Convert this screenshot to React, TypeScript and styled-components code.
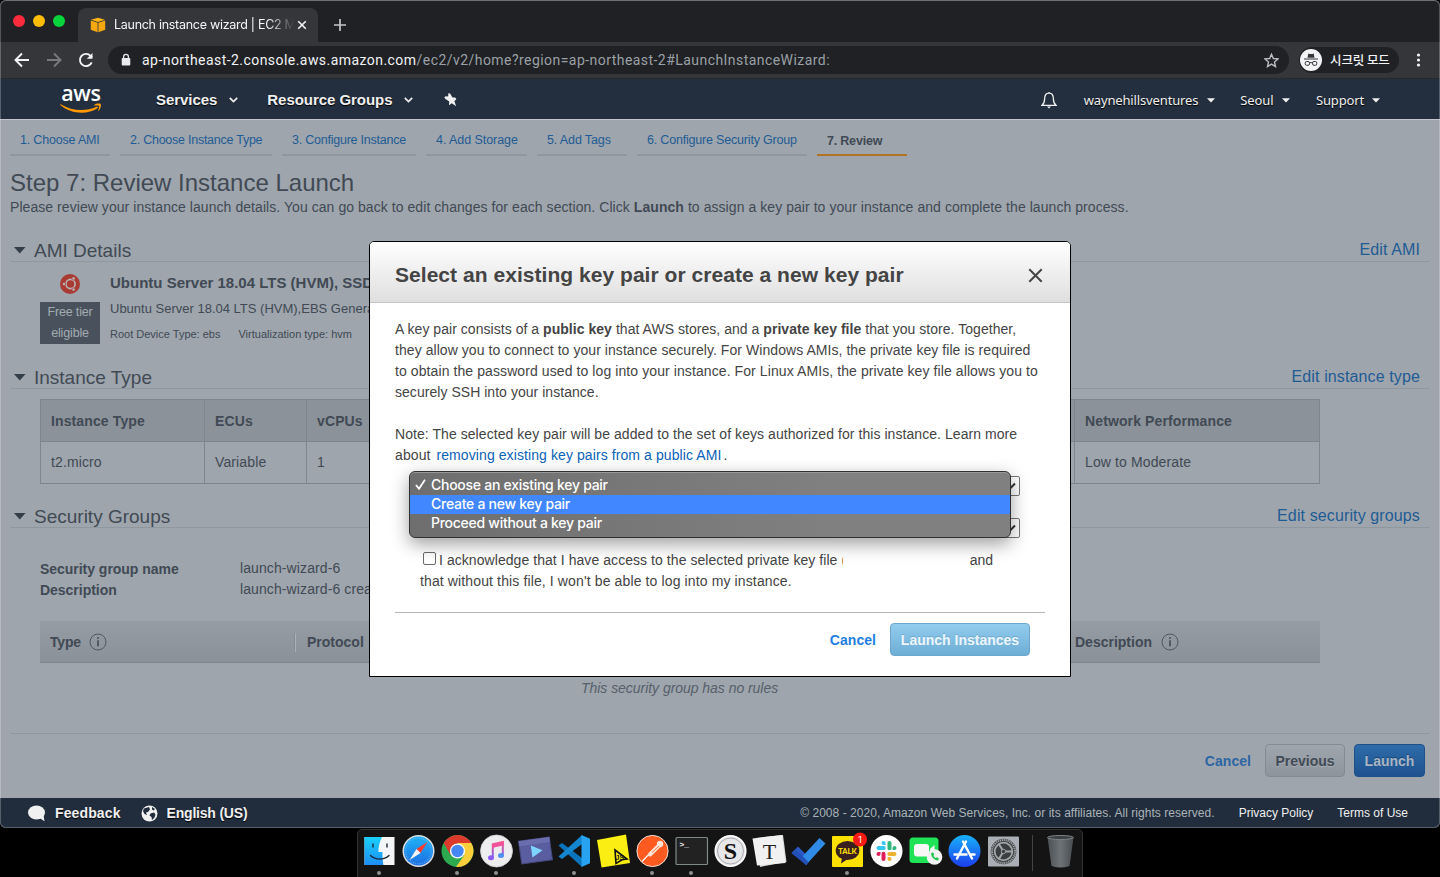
import React from "react";
import styled, { createGlobalStyle, css } from "styled-components";

const GlobalStyle = createGlobalStyle`
  html, body { margin: 0; padding: 0; background: #000; }
  body { font-family: "Liberation Sans", Arial, sans-serif; overflow: hidden; }
  *, *::before, *::after { box-sizing: border-box; }
  svg { display: block; flex: none; }
`;

const Desktop = styled.div`
  position: relative;
  display: flex;
  flex-direction: column;
  align-items: center;
  width: 1440px;
  height: 877px;
  background: #000;
  overflow: hidden;
`;

const BrowserWindow = styled.div`
  position: relative;
  display: flex;
  flex: none;
  flex-direction: column;
  width: 1440px;
  height: 828px;
  border-radius: 6px;
  overflow: hidden;
  background: #9ea5ad;
  &::after {
    content: "";
    position: absolute;
    inset: 0;
    border-radius: 6px;
    box-shadow: inset 0 0 0 1px rgba(255, 255, 255, 0.24), inset 0 1px 0 rgba(255, 255, 255, 0.15);
    pointer-events: none;
  }
`;

/* ---------- browser chrome ---------- */

const TabStrip = styled.div`
  display: flex;
  align-items: flex-end;
  height: 42px;
  background: #202124;
`;

const TrafficLights = styled.div`
  display: flex;
  gap: 8px;
  width: 78px;
  padding: 0 0 15px 13px;
`;

const Light = styled.span<{ $color: string }>`
  width: 12px;
  height: 12px;
  border-radius: 50%;
  background: ${(p) => p.$color};
`;

const Tab = styled.div`
  display: flex;
  align-items: center;
  width: 240px;
  height: 34px;
  padding: 0 11px 0 12px;
  border-radius: 8px 8px 0 0;
  background: #35363a;
`;

const TabTitle = styled.span`
  flex: 1;
  margin-left: 8px;
  white-space: nowrap;
  font: 400 12.5px/18px Inter, Roboto, sans-serif;
  letter-spacing: -0.28px;
  color: #f4f5f6;
  mask-image: linear-gradient(90deg, #000 154px, transparent 180px);
`;

const NewTab = styled.div`
  padding: 0 0 10px 15px;
`;

const Toolbar = styled.div`
  display: flex;
  align-items: center;
  height: 37px;
  padding: 0 14px;
  border-bottom: 1px solid #28292c;
  background: #35363a;
`;

const NavButtons = styled.div`
  display: flex;
  gap: 16px;
  width: 94px;
`;

const AddressBar = styled.div`
  display: flex;
  align-items: center;
  width: 1181px;
  height: 28px;
  padding: 0 10px 0 12px;
  border-radius: 14px;
  background: #202124;
`;

const Url = styled.span`
  flex: 1;
  margin-left: 10px;
  white-space: nowrap;
  font: 400 14px/20px Roboto, sans-serif;
  letter-spacing: 0.45px;
  color: #9aa0a6;
  b {
    font-weight: 400;
    color: #f1f3f4;
  }
`;

const IncognitoPill = styled.div`
  display: flex;
  align-items: center;
  gap: 8px;
  width: 100px;
  height: 26px;
  margin-left: 10px;
  padding-left: 1px;
  border-radius: 13px;
  background: #202124;
  font: 500 12.5px/18px "Noto Sans CJK KR", sans-serif;
  color: #f1f3f4;
  white-space: nowrap;
  letter-spacing: -0.1px;
`;

const ToolbarMenu = styled.div`
  margin-left: 16px;
`;

/* ---------- console header ---------- */

const ConsoleHeader = styled.header`
  display: flex;
  align-items: center;
  height: 40px;
  padding: 2px 60px 0;
  background: #232f3e;
`;

const Logo = styled.div`
  display: flex;
  flex-direction: column;
  align-items: center;
  width: 42px;
  height: 30px;
  margin-top: -5px;
  font: 600 21.5px/19px "Open Sans", sans-serif;
  letter-spacing: -0.3px;
  color: #fff;
  svg { margin-top: 1px; }
`;

const NavItem = styled.div<{ $ml: number; $small?: boolean; $gap: number }>`
  display: flex;
  align-items: center;
  gap: ${(p) => p.$gap}px;
  margin-left: ${(p) => p.$ml}px;
  color: #f0f0f0;
  white-space: nowrap;
  text-shadow: 0 1px 1px #000;
  ${(p) =>
    p.$small
      ? css`font: 400 13px/20px "Noto Sans", sans-serif; letter-spacing: -0.14px;`
      : css`font: 700 15px/20px "Liberation Sans", Arial, sans-serif; letter-spacing: -0.05px;`}
`;

const Spacer = styled.div`
  flex: 1;
`;

/* ---------- page ---------- */

const Page = styled.main`
  display: flex;
  flex-direction: column;
  height: 679px;
  padding: 0 10px;
  border-top: 1px solid #c0c6cc;
  background: #9ea5ad;
  color: #414a54;
`;

const WizardSteps = styled.nav`
  display: flex;
  gap: 10px;
  height: 36px;
`;

const WizardStep = styled.div<{ $w: number; $active?: boolean; $ls: number }>`
  width: ${(p) => p.$w}px;
  padding: ${(p) => (p.$active ? 11 : 10)}px 0 0 10px;
  border-bottom: 2px solid ${(p) => (p.$active ? "#b17423" : "#8f979f")};
  font-size: 12.5px;
  line-height: 20px;
  white-space: nowrap;
  letter-spacing: ${(p) => p.$ls}px;
  font-weight: ${(p) => (p.$active ? 700 : 400)};
  color: ${(p) => (p.$active ? "#414a54" : "#1f5c94")};
`;

const PageTitle = styled.h1`
  margin: 12px 0 0;
  font-size: 24px;
  line-height: 30px;
  font-weight: 400;
`;

const Intro = styled.p`
  margin: -1px 0 0;
  font-size: 14px;
  line-height: 21px;
  letter-spacing: 0.059px;
  white-space: nowrap;
`;

const SectionHead = styled.div<{ $mt: number }>`
  display: flex;
  align-items: center;
  height: 25px;
  margin-top: ${(p) => p.$mt}px;
  padding: 4px 10px 0 4px;
  border-bottom: 1px solid #8f979f;
  svg { margin-top: -2px; }
  h2 {
    flex: 1;
    margin: 0 0 0 8px;
    font-size: 19px;
    line-height: 20px;
    font-weight: 400;
  }
  a {
    margin-top: -2px;
    font-size: 16px;
    line-height: 20px;
    letter-spacing: 0.12px;
    color: #1f5c94;
  }
`;

const AmiRow = styled.div`
  display: flex;
  gap: 10px;
  height: 101px;
  padding: 10px 0 0 30px;
  white-space: nowrap;
`;

const AmiBadge = styled.div`
  display: flex;
  flex-direction: column;
  align-items: center;
  width: 60px;
  padding-top: 2px;
`;

const FreeTier = styled.div`
  width: 60px;
  height: 42px;
  margin-top: 8px;
  background: #49525c;
  color: #a3abb2;
  font-size: 12.5px;
  line-height: 21px;
  letter-spacing: -0.15px;
  text-align: center;
`;

const AmiText = styled.div`
  h3 { margin: 0; font-size: 15px; line-height: 22px; }
  p { margin: 4px 0 0; font-size: 13px; line-height: 21px; }
  div { display: flex; gap: 18px; margin-top: 5px; font-size: 11px; line-height: 21px; }
`;

const InstanceTable = styled.div`
  display: grid;
  grid-template-columns: 164px 102px 768px 244px;
  grid-template-rows: 42px 41px;
  width: 1280px;
  height: 85px;
  margin: 10px 0 0 30px;
  border: 1px solid #7d858e;
`;

const Cell = styled.div<{ $head?: boolean; $last?: boolean }>`
  padding: 0 10px;
  font-size: 14px;
  line-height: ${(p) => (p.$head ? 43 : 41)}px;
  letter-spacing: 0.12px;
  font-weight: ${(p) => (p.$head ? 700 : 400)};
  background: ${(p) => (p.$head ? "#8b929a" : "transparent")};
  border-right: ${(p) => (p.$last ? 0 : 1)}px solid #7d858e;
  border-bottom: ${(p) => (p.$head ? 1 : 0)}px solid #7d858e;
`;

const Definitions = styled.dl`
  display: grid;
  grid-template-columns: 200px 600px;
  grid-auto-rows: 21px;
  margin: 30px 0 0 30px;
  font-size: 14px;
  line-height: 21px;
  dt { font-weight: 700; padding-top: 1px; letter-spacing: -0.03px; }
  dd { margin: 0; letter-spacing: 0.1px; }
`;

const RulesHead = styled.div`
  display: flex;
  align-items: center;
  width: 1280px;
  height: 42px;
  margin: 21px 0 0 30px;
  padding: 1px 10px 0;
  background: linear-gradient(#959ca4, #8a9199);
  border-bottom: 1px solid #7d858d;
  font-size: 14px;
  font-weight: 700;
  color: #414a54;
`;

const RuleCol = styled.div<{ $w: number; $div?: boolean; $indent?: number; $ls?: number }>`
  display: flex;
  align-items: center;
  gap: 8.5px;
  width: ${(p) => p.$w}px;
  height: 19px;
  padding-left: ${(p) => p.$indent ?? 0}px;
  line-height: 19px;
  letter-spacing: ${(p) => p.$ls ?? 0}px;
  border-right: ${(p) => (p.$div ? "1px solid #a9b0b7" : "0")};
  box-shadow: ${(p) => (p.$div ? "inset -1px 0 0 #858c94" : "none")};
`;

const NoRules = styled.div`
  margin: 15px 0 0 571px;
  font-size: 14px;
  line-height: 21px;
  font-style: italic;
  letter-spacing: -0.04px;
  color: #57606a;
`;

const ActionBar = styled.div`
  display: flex;
  justify-content: flex-end;
  align-items: center;
  height: 54px;
  margin-top: 34px;
  padding-right: 5px;
  border-top: 1px solid #8f979f;
`;

const CancelLink = styled.a<{ $dim?: boolean }>`
  margin-right: 14px;
  padding-top: ${(p) => (p.$dim ? 1 : 2)}px;
  font-size: 14px;
  font-weight: 700;
  letter-spacing: 0.05px;
  color: ${(p) => (p.$dim ? "#2c66a3" : "#1f7fe0")};
`;

type Tone = "plain" | "primary" | "light";
const tones = {
  plain: css`background: linear-gradient(#a0a6ad, #8d949c); border-color: #838b93; color: #414a54; text-shadow: 0 1px 0 #a6adb5;`,
  primary: css`background: linear-gradient(#2e6ca9, #1d528f); border-color: #1e5089; color: #a9b6c4; text-shadow: 0 -1px 0 #1a4475;`,
  light: css`background: linear-gradient(#92ccef, #6dadd4); border-color: #6ba8cb; color: #edf7fd; text-shadow: 0 -1px 0 #6fa9cc;`,
};

const Button = styled.button<{ $tone: Tone; $w: number; $ml?: number }>`
  width: ${(p) => p.$w}px;
  height: 33px;
  margin: 0 0 0 ${(p) => p.$ml ?? 0}px;
  padding: 0;
  border: 1px solid;
  border-radius: 4px;
  font: 700 14px/20px "Liberation Sans", Arial, sans-serif;
  white-space: nowrap;
  ${(p) => tones[p.$tone]}
`;

const ConsoleFooter = styled.footer`
  display: flex;
  align-items: center;
  height: 30px;
  padding: 0 32px 0 28px;
  background: #212d3c;
  color: #f0f0f0;
  font-size: 12px;
  white-space: nowrap;
`;

const FooterItem = styled.div<{ $mr: number; $ls: number }>`
  display: flex;
  align-items: center;
  gap: 9px;
  margin-right: ${(p) => p.$mr}px;
  font-size: 14px;
  font-weight: 700;
  letter-spacing: ${(p) => p.$ls}px;
  text-shadow: 0 1px 1px #000;
`;

const Copyright = styled.span`
  letter-spacing: 0.04px;
  color: #a9b3b8;
`;

const FooterLink = styled.span`
  margin-left: 24px;
`;

/* ---------- dialog ---------- */

const Dialog = styled.section`
  position: absolute;
  left: 369px;
  top: 241px;
  width: 702px;
  height: 436px;
  border: 1px solid #000;
  border-radius: 5px 5px 0 0;
  background: #fff;
  color: #444;
  overflow: hidden;
`;

const DialogHead = styled.div`
  display: flex;
  align-items: center;
  justify-content: space-between;
  height: 61px;
  padding: 6px 27px 0 25px;
  border-bottom: 1px solid #c4c4c4;
  background: linear-gradient(#fff, #dfdfdf);
  h2 {
    margin: 0;
    font-size: 21px;
    line-height: 26px;
    letter-spacing: 0.04px;
    white-space: nowrap;
  }
`;

const DialogBody = styled.div`
  padding: 16px 25px 0;
  font-size: 14px;
  line-height: 21px;
  white-space: nowrap;
`;

const Paragraph = styled.p`
  margin: 0 0 21px;
`;

const Line = styled.span<{ $ls?: number }>`
  display: block;
  letter-spacing: ${(p) => p.$ls ?? 0.06}px;
  a { color: #0b62b8; margin-left: 2px; margin-right: 2px; }
`;

const SelectBox = styled.div<{ $mt: number }>`
  display: flex;
  align-items: center;
  justify-content: flex-end;
  height: 20px;
  margin: ${(p) => p.$mt}px 25px 0;
  padding-right: 3px;
  border: 1px solid #767676;
  border-radius: 2px;
  background: #fff;
`;

const Acknowledge = styled.div`
  height: 42px;
  margin: 12px 25px 0;
`;

const Checkbox = styled.span`
  display: inline-block;
  width: 13px;
  height: 13px;
  margin: 0 3px 0 3px;
  border: 1px solid #6a6a6a;
  border-radius: 2px;
  background: #fff;
  vertical-align: 0;
`;

const HiddenName = styled.span`
  display: inline-block;
  position: relative;
  width: 126.5px;
  height: 20px;
  margin-left: -3px;
  background: #fff;
  vertical-align: -6px;
`;

const DialogActions = styled.div`
  display: flex;
  justify-content: flex-end;
  align-items: center;
  height: 54px;
  margin-top: 20px;
  padding-right: 15px;
  border-top: 1px solid #b5b5b5;
`;

const Menu = styled.ul`
  position: absolute;
  left: 409px;
  top: 471px;
  width: 602px;
  height: 67px;
  margin: 0;
  padding: 4px 0;
  list-style: none;
  border: 1px solid #303030;
  border-radius: 6px;
  background: linear-gradient(90deg, #6e6e6e, #808080 70%);
  box-shadow: inset 0 1px 0 #999, 0 6px 18px rgba(0, 0, 0, 0.38);
`;

const MenuItem = styled.li<{ $active?: boolean }>`
  display: flex;
  align-items: center;
  height: 19px;
  padding: 0 0 2px 5px;
  background: ${(p) => (p.$active ? "#4187ff" : "transparent")};
  color: #fff;
  font: 500 14px/17px Inter, Roboto, sans-serif;
  letter-spacing: -0.27px;
  white-space: nowrap;
`;

const MenuMark = styled.span`
  width: 16px;
`;

/* ---------- dock ---------- */

const Dock = styled.div`
  display: flex;
  flex: none;
  width: 726px;
  height: 50px;
  margin-top: 1px;
  padding-left: 2px;
  border: 1px solid #333;
  border-radius: 5px 5px 0 0;
  background: #141414;
`;

const DockSlot = styled.div<{ $running?: boolean }>`
  display: flex;
  flex-direction: column;
  align-items: center;
  width: 39px;
  padding-top: 2px;
  &::after {
    content: "";
    width: 4px;
    height: 4px;
    margin: 2px 1px 0 0;
    border-radius: 50%;
    background: ${(p) => (p.$running ? "#8f8f8f" : "transparent")};
  }
`;

const DockDivider = styled.div`
  width: 1px;
  height: 36px;
  margin: 5px 8px 0 9px;
  background: #444;
`;

/* ---------- small drawings ---------- */

const Chevron = () => (
  <svg width="9" height="6" viewBox="0 0 9 6" fill="none" stroke="#f0f0f0" strokeWidth="1.7"><path d="M.8.9 4.5 4.5 8.2.9" /></svg>
);
const Caret = () => (
  <svg width="8" height="5" viewBox="0 0 8 5" fill="#f0f0f0"><path d="M0 .3h8L4 4.5z" /></svg>
);
const Disclosure = () => (
  <svg width="12" height="7" viewBox="0 0 12 7" fill="#343e49"><path d="M0 0h11.500L5.750 6.500z" /></svg>
);
const Info = () => (
  <svg width="18" height="18" viewBox="0 0 18 18" fill="none" stroke="#505963">
    <circle cx="9" cy="9" r="8" />
    <path d="M9 7.300v6" strokeWidth="2" />
    <circle cx="9" cy="5" r="1.1" fill="#505963" stroke="none" />
  </svg>
);
const SelectArrow = () => (
  <svg width="11" height="8" viewBox="0 0 11 8" fill="none" stroke="#333" strokeWidth="2"><path d="M1 1.500 5.500 6 10 1.500" /></svg>
);

const dockIcons: { running?: boolean; art: React.ReactNode }[] = [
  { running: true, art: (
    <>
      <rect x="3.500" y="5" width="30" height="28" fill="#f3f5f7" />
      <path d="M3.500 5H21c-2.500 5-3.600 10-3.600 15h4c-.1 4 .2 8 1 13H3.500z" fill="url(#finder)" />
      <path d="M12 12v3M26 12v3M9.500 23.500c5 4.800 13.500 4.800 18.500 0" fill="none" stroke="#1b2a3a" strokeWidth="1.400" strokeLinecap="round" />
    </>
  ) },
  { art: (
    <>
      <circle cx="18.500" cy="19" r="16" fill="#d9dde1" />
      <circle cx="18.500" cy="19" r="14.500" fill="url(#safari)" />
      <circle cx="18.500" cy="19" r="12.800" fill="none" stroke="#6fbdf2" strokeWidth="1.400" strokeDasharray=".6 1.300" />
      <path d="M27.500 10 20.500 21l-4-4z" fill="#ff3b30" />
      <path d="M9.500 28l7-11 4 4z" fill="#f4f4f4" />
    </>
  ) },
  { running: true, art: (
    <g transform="translate(2.500 3)">
      <circle cx="16" cy="16" r="16" fill="#2da94f" />
      <path d="M14.500 31.900A16 16 0 0 0 29.800 8H16l6.900 12z" fill="#fdd03b" />
      <path d="M2.200 8a16 16 0 0 1 27.600 0H16L9.100 20z" fill="#db3a2d" />
      <circle cx="16" cy="16" r="7.600" fill="#fff" />
      <circle cx="16" cy="16" r="6.200" fill="#4587f3" />
    </g>
  ) },
  { running: true, art: (
    <>
      <circle cx="18.500" cy="19" r="16" fill="#ededf0" stroke="#cfcfd4" strokeWidth=".8" />
      <path d="M14.800 25.500V12.300l10-2.300v13" fill="none" stroke="url(#note)" strokeWidth="2" />
      <path d="M14 12.500 25.800 9.800v3.500L14 16z" fill="#f2519b" />
      <ellipse cx="13" cy="25.800" rx="3" ry="2.500" fill="#8c5cf5" />
      <ellipse cx="23" cy="23.500" rx="3" ry="2.500" fill="#4f8df8" />
    </>
  ) },
  { art: (
    <g transform="rotate(-8 18.500 18.500)">
      <rect x="3" y="7" width="31" height="23" fill="#5a5ea0" stroke="#44487c" />
      <path d="M3 7h31v5H3z" fill="#6a6eae" />
      <path d="m14.500 13 11 6.200-11 5.800z" fill="#7fd4ff" />
    </g>
  ) },
  { running: true, art: (
    <>
      <path d="M2.500 13.500 6 11l20 15v9z" fill="#0a74bd" />
      <path d="M2.500 24.500 6 27l20-15V3z" fill="#1485cf" />
      <path d="M25.500 3 34 6.800v24.400L25.500 35z" fill="#27a3f1" />
    </>
  ) },
  { art: (
    <>
      <path d="M2 8 31 2.500 35 31 6.500 35.500z" fill="#fbee12" />
      <path d="m20 18 12 9-5 .8-6 3.700z" fill="none" stroke="#111" strokeWidth="1.600" />
      <text x="20.500" y="27.500" fontSize="7" fontWeight="700" fill="#111" fontFamily="Liberation Sans">JS</text>
    </>
  ) },
  { running: true, art: (
    <>
      <circle cx="18.500" cy="19" r="15.600" fill="#ff5a1f" stroke="#f2e3dc" strokeWidth="1" />
      <path d="M8 29.500 20 17" stroke="#fff" strokeWidth="1.200" />
      <path d="M16 22.500 24.500 14" stroke="#ffe4d6" strokeWidth="4" strokeLinecap="round" />
      <circle cx="26" cy="12" r="3.200" fill="#ffe4d6" />
      <path d="m18 20.500 7-6.500" stroke="#ff5a1f" strokeWidth=".8" />
    </>
  ) },
  { running: true, art: (
    <>
      <rect x="3" y="5.500" width="31.500" height="27" rx="1" fill="#222" stroke="#7d8b8b" strokeWidth="1.200" />
      <text x="6.500" y="15" fontSize="8" fontWeight="700" fill="#eee" fontFamily="Liberation Mono">&gt;_</text>
    </>
  ) },
  { art: (
    <>
      <circle cx="18.500" cy="19" r="15.300" fill="#e7e7ea" stroke="#fff" strokeWidth="1.500" />
      <circle cx="18.500" cy="19" r="13" fill="none" stroke="#9b9ba2" strokeWidth=".8" />
      <text x="18.500" y="27" fontSize="24" fontWeight="700" fill="#111" textAnchor="middle" fontFamily="Liberation Serif">S</text>
    </>
  ) },
  { art: (
    <>
      <path d="M5 6 32 3 35.500 30 9 35z" fill="#d9d9d9" />
      <path d="M1.500 6.500 31 3l3.500 28L6 33.500z" fill="#f1f1f1" />
      <text x="18.500" y="27" fontSize="22" fill="#222" textAnchor="middle" fontFamily="Liberation Serif">T</text>
    </>
  ) },
  { art: (
    <>
      <path d="M1.500 21 8 14.500l9.500 9.500-.5 9z" fill="#2b59c3" />
      <path d="m10.500 26.500 19-20.500 6 5.500L16 33z" fill="#2f8be6" />
      <path d="m1.500 21 4-4 13 13-2.500 3z" fill="#2250b8" />
    </>
  ) },
  { running: true, art: (
    <>
      <rect x="3" y="4" width="31" height="31" rx="1" fill="#fae100" />
      <ellipse cx="18.500" cy="18.500" rx="11.800" ry="9.500" fill="#3b1e1e" />
      <path d="m13 26-1 5.500 6-4z" fill="#3b1e1e" />
      <text x="18.500" y="21.500" fontSize="7.500" fontWeight="900" fill="#fae100" textAnchor="middle" fontFamily="Lato, Inter">TALK</text>
      <circle cx="31" cy="7.500" r="7" fill="#fa1a14" />
      <text x="31" y="11" fontSize="9.500" fill="#fff" textAnchor="middle" fontFamily="Inter">1</text>
    </>
  ) },
  { art: (
    <>
      <circle cx="18.500" cy="19" r="16" fill="#fff" />
      {["#36c5f0", "#2eb67d", "#ecb22e", "#e01e5a"].map((color, i) => (
        <g key={color} transform={`translate(18.500 19) rotate(${i * 90})`} fill={color}>
          <rect x="-10" y="-5" width="9.200" height="4" rx="2" />
          <path d="M-5 -8a2 2 0 1 1 4 0v2h-2a2 2 0 0 1-2-2z" />
        </g>
      ))}
    </>
  ) },
  { art: (
    <>
      <rect x="2.500" y="5.500" width="29" height="25.500" rx="3.500" fill="#1fe256" />
      <rect x="7" y="12" width="15" height="12.500" rx="3" fill="#f7f7f7" />
      <path d="m23 17 4.500-4v11L23 20z" fill="#f7f7f7" />
      <circle cx="27.500" cy="25" r="7.800" fill="#f2f2f2" />
      <path d="M24 21.500c.5 4 3 6.500 7 7l1-2-2.200-1.300-1.300.8c-1-.6-1.600-1.300-2-2.200l.8-1.300L26 20.300z" fill="#26c552" />
    </>
  ) },
  { art: (
    <>
      <circle cx="18.500" cy="19" r="16" fill="url(#store)" />
      <path d="M20 9.500 11 26.500M17 9.500l9 17M8.500 22.500h12M24 22.500h4.500" fill="none" stroke="#fff" strokeWidth="2.400" strokeLinecap="round" />
    </>
  ) },
  { art: (
    <>
      <rect x="3" y="4.500" width="31" height="30" rx="1" fill="#a9afb4" />
      <circle cx="18.500" cy="19.500" r="12.800" fill="#3b3d3f" />
      <circle cx="18.500" cy="19.500" r="11.500" fill="none" stroke="#a4a7aa" strokeWidth="2" strokeDasharray="1.200 .8" />
      <circle cx="18.500" cy="19.500" r="8.800" fill="none" stroke="#a4a7aa" strokeWidth="1.800" />
      <path d="M18.500 19.500h9M18.500 19.500l-5-8M18.500 19.500l-5 8" stroke="#a4a7aa" strokeWidth="2" />
      <circle cx="18.500" cy="19.500" r="2.200" fill="#3b3d3f" stroke="#a4a7aa" />
    </>
  ) },
];

const DockSvg = ({ children }: { children: React.ReactNode }) => (
  <svg width="37" height="37" viewBox="0 0 37 37" overflow="visible">{children}</svg>
);

const steps = [
  { label: "1. Choose AMI", w: 100, ls: -0.18 },
  { label: "2. Choose Instance Type", w: 152, ls: -0.25 },
  { label: "3. Configure Instance", w: 134, ls: -0.23 },
  { label: "4. Add Storage", w: 101, ls: -0.06 },
  { label: "5. Add Tags", w: 90, ls: -0.12 },
  { label: "6. Configure Security Group", w: 170, ls: -0.19 },
  { label: "7. Review", w: 90, ls: -0.2, active: true },
];

export default function App() {
  return (
    <Desktop>
      <GlobalStyle />
      <BrowserWindow>
        <TabStrip>
          <TrafficLights>
            <Light $color="#fc2a3c" />
            <Light $color="#fdbc05" />
            <Light $color="#08d43b" />
          </TrafficLights>
          <Tab>
            <svg width="16" height="16" viewBox="0 0 16 16">
              <path d="M1 2.800 8 .8l7 2-7 2.300z" fill="#fbb415" />
              <path d="M.8 3.500 7.600 5.700v9.500L.8 12.800zM15.200 3.500 8.400 5.700v9.500l6.800-2.400z" fill="#f5a80f" />
            </svg>
            <TabTitle>Launch instance wizard | EC2 M</TabTitle>
            <svg width="10" height="10" viewBox="0 0 10 10" stroke="#f1f3f4" strokeWidth="1.600"><path d="m1.200 1.200 7.600 7.600M8.800 1.200 1.200 8.800" /></svg>
          </Tab>
          <NewTab>
            <svg width="14" height="14" viewBox="0 0 14 14" stroke="#c3c6ca" strokeWidth="1.700"><path d="M7 1v12M1 7h12" /></svg>
          </NewTab>
        </TabStrip>
        <Toolbar>
          <NavButtons>
            <svg width="16" height="16" viewBox="0 0 16 16" fill="none" stroke="#f1f3f4" strokeWidth="1.900"><path d="M15 8H2M8 1.500 1.500 8 8 14.500" /></svg>
            <svg width="16" height="16" viewBox="0 0 16 16" fill="none" stroke="#77797c" strokeWidth="1.900"><path d="M1 8h13M8 1.500 14.500 8 8 14.500" /></svg>
            <svg width="16" height="16" viewBox="0 0 16 16" fill="none" stroke="#f1f3f4" strokeWidth="1.900"><path d="M13.700 10.300A6.100 6.100 0 1 1 12.500 3.800l1.500 1.600" /><path d="M14.500 1v5.800H8.800z" fill="#f1f3f4" stroke="none" /></svg>
          </NavButtons>
          <AddressBar>
            <svg width="12" height="14" viewBox="0 0 12 14"><rect x="1.700" y="5" width="8.600" height="7.500" rx="1" fill="#e8eaed" /><path d="M3.600 6V3.700a2.400 2.400 0 0 1 4.800 0V6" fill="none" stroke="#e8eaed" strokeWidth="1.300" /></svg>
            <Url><b>ap-northeast-2.console.aws.amazon.com</b>/ec2/v2/home?region=ap-northeast-2#LaunchInstanceWizard:</Url>
            <svg width="15" height="15" viewBox="0 0 15 15" fill="none" stroke="#b9bcc0" strokeWidth="1.400"><path d="m7.500 1.200 1.850 4.300 4.650.4-3.500 3.100 1 4.600-4-2.450-4 2.450 1-4.600L1 5.900l4.650-.4z" /></svg>
          </AddressBar>
          <IncognitoPill>
            <svg width="22" height="22" viewBox="0 0 22 22">
              <circle cx="11" cy="11" r="11" fill="#f1f3f4" />
              <path d="M7.500 8.700 8.300 4.500q2.700 1 5.400 0l.8 4.200z" fill="#35363a" />
              <path d="M4 10h14" stroke="#35363a" strokeWidth="1.200" />
              <path d="M9.500 14q1.500-1 3 0" fill="none" stroke="#35363a" />
              <rect x="5.200" y="12.500" width="4.300" height="3.800" rx="1.500" fill="none" stroke="#35363a" />
              <rect x="12.500" y="12.500" width="4.300" height="3.800" rx="1.500" fill="none" stroke="#35363a" />
            </svg>
            시크릿 모드
          </IncognitoPill>
          <ToolbarMenu>
            <svg width="6" height="14" viewBox="0 0 6 14" fill="#f1f3f4"><circle cx="3.500" cy="2" r="1.600" /><circle cx="3.500" cy="7" r="1.600" /><circle cx="3.500" cy="12" r="1.600" /></svg>
          </ToolbarMenu>
        </Toolbar>
        <ConsoleHeader>
          <Logo>
            aws
            <svg width="42" height="11" viewBox="0 0 42 11" fill="#f90">
              <path d="M.6 1.200c12 7 24.500 7.600 36 2.600 1-.4 1.800.6.8 1.400C28 11.800 11 11.500.3 2c-.5-.5-.2-1 .3-.8z" />
              <path d="M34.200 2c1.500-1.500 5.500-1.700 6.500-1 .8.900-.3 5.200-2 6.800-.4.300-.8.100-.6-.3.500-1.400 1.300-4 .9-4.600-.5-.6-3-.4-4.500-.3-.5 0-.6-.3-.3-.6z" />
            </svg>
          </Logo>
          <NavItem $ml={54} $gap={12}>Services <Chevron /></NavItem>
          <NavItem $ml={29} $gap={12}>Resource Groups <Chevron /></NavItem>
          <NavItem $ml={31} $gap={0}>
            <svg width="13" height="14" viewBox="0 0 13 14" fill="#f0f0f0"><path d="m4.400.2 1.700.2 2.400 4 2.700.1 1.200 1.800-2 1.600 1.700 5.300-4.300-3-2.800 2.100.2-3.700L1.200 5.700.3 4.500l1.200-1.300 2.600.3z" /></svg>
          </NavItem>
          <Spacer />
          <svg width="16" height="18" viewBox="0 0 16 18" fill="none" stroke="#f0f0f0" strokeWidth="1.300">
            <path d="M8 1v1M1 14.300c2-1.500 2.600-3 2.600-6.300C3.600 4.600 5.300 2.200 8 2.200S12.400 4.600 12.400 8c0 3.300.6 4.800 2.600 6.300z" />
            <path d="M6 15.500h4l-2 2z" fill="#f0f0f0" stroke="none" />
          </svg>
          <NavItem $ml={27} $gap={9} $small>waynehillsventures <Caret /></NavItem>
          <NavItem $ml={25} $gap={8.5} $small>Seoul <Caret /></NavItem>
          <NavItem $ml={26} $gap={8} $small>Support <Caret /></NavItem>
        </ConsoleHeader>
        <Page>
          <WizardSteps>
            {steps.map((s) => (
              <WizardStep key={s.label} $w={s.w} $ls={s.ls} $active={s.active}>{s.label}</WizardStep>
            ))}
          </WizardSteps>
          <PageTitle>Step 7: Review Instance Launch</PageTitle>
          <Intro>Please review your instance launch details. You can go back to edit changes for each section. Click <b>Launch</b> to assign a key pair to your instance and complete the launch process.</Intro>
          <SectionHead $mt={19}><Disclosure /><h2>AMI Details</h2><a>Edit AMI</a></SectionHead>
          <AmiRow>
            <AmiBadge>
              <svg width="20" height="20" viewBox="0 0 20 20">
                <circle cx="10" cy="10" r="10" fill="#a93b33" />
                <circle cx="10.500" cy="10" r="4.600" fill="none" stroke="#b9b4b5" strokeWidth="1.700" />
                <g fill="#b9b4b5" stroke="#a93b33" strokeWidth=".7"><circle cx="4" cy="10" r="1.700" /><circle cx="13.600" cy="4.400" r="1.700" /><circle cx="13.600" cy="15.600" r="1.700" /></g>
              </svg>
              <FreeTier>Free tier<br />eligible</FreeTier>
            </AmiBadge>
            <AmiText>
              <h3>Ubuntu Server 18.04 LTS (HVM), SSD</h3>
              <p>Ubuntu Server 18.04 LTS (HVM),EBS General Purpose</p>
              <div><span>Root Device Type: ebs</span><span>Virtualization type: hvm</span></div>
            </AmiText>
          </AmiRow>
          <SectionHead $mt={1}><Disclosure /><h2>Instance Type</h2><a>Edit instance type</a></SectionHead>
          <InstanceTable>
            <Cell $head>Instance Type</Cell><Cell $head>ECUs</Cell><Cell $head>vCPUs</Cell><Cell $head $last>Network Performance</Cell>
            <Cell>t2.micro</Cell><Cell>Variable</Cell><Cell>1</Cell><Cell $last>Low to Moderate</Cell>
          </InstanceTable>
          <SectionHead $mt={19}><Disclosure /><h2>Security Groups</h2><a>Edit security groups</a></SectionHead>
          <Definitions>
            <dt>Security group name</dt><dd>launch-wizard-6</dd>
            <dt>Description</dt><dd>launch-wizard-6 created</dd>
          </Definitions>
          <RulesHead>
            <RuleCol $w={246} $div $ls={-0.2}>Type <Info /></RuleCol>
            <RuleCol $w={779} $indent={11}>Protocol</RuleCol>
            <RuleCol $w={200}>Description <Info /></RuleCol>
          </RulesHead>
          <NoRules>This security group has no rules</NoRules>
          <ActionBar>
            <CancelLink $dim>Cancel</CancelLink>
            <Button $tone="plain" $w={80}>Previous</Button>
            <Button $tone="primary" $w={71} $ml={9}>Launch</Button>
          </ActionBar>
        </Page>
        <ConsoleFooter>
          <FooterItem $mr={20} $ls={0.12}>
            <svg width="18" height="17" viewBox="0 0 18 17" fill="#f0f0f0"><ellipse cx="8.500" cy="7.500" rx="8.500" ry="7" /><path d="m10 12 6.500 4.300-1-6.300z" /></svg>
            Feedback
          </FooterItem>
          <FooterItem $mr={0} $ls={-0.2}>
            <svg width="17" height="17" viewBox="0 0 17 17"><circle cx="8.500" cy="8.500" r="8" fill="#f0f0f0" /><path d="M3 3.500 8 2l1 2.500L7 7l-2 .5 1 2.500-2.500-1L2 6zM9.500 8.500l3.500-1 1.500 2-1 3-2.500 2.500-.5-3-2-1.500zM11 2l3 2-1.500 1.500-1.500-1z" fill="#212d3c" /></svg>
            English (US)
          </FooterItem>
          <Spacer />
          <Copyright>© 2008 - 2020, Amazon Web Services, Inc. or its affiliates. All rights reserved.</Copyright>
          <FooterLink>Privacy Policy</FooterLink>
          <FooterLink>Terms of Use</FooterLink>
        </ConsoleFooter>
      </BrowserWindow>

      <Dialog>
        <DialogHead>
          <h2>Select an existing key pair or create a new key pair</h2>
          <svg width="15" height="15" viewBox="0 0 15 15" stroke="#444" strokeWidth="2"><path d="m1.300 1.300 12.400 12.400M13.700 1.300 1.300 13.700" /></svg>
        </DialogHead>
        <DialogBody>
          <Paragraph>
            <Line $ls={0.04}>A key pair consists of a <b>public key</b> that AWS stores, and a <b>private key file</b> that you store. Together,</Line>
            <Line>they allow you to connect to your instance securely. For Windows AMIs, the private key file is required</Line>
            <Line $ls={0.09}>to obtain the password used to log into your instance. For Linux AMIs, the private key file allows you to</Line>
            <Line $ls={0.04}>securely SSH into your instance.</Line>
          </Paragraph>
          <Line>Note: The selected key pair will be added to the set of keys authorized for this instance. Learn more</Line>
          <Line $ls={0.09}>about <a>removing existing key pairs from a public AMI</a>.</Line>
          <SelectBox $mt={10}><SelectArrow /></SelectBox>
          <SelectBox $mt={22}><SelectArrow /></SelectBox>
          <Acknowledge>
            <Line><Checkbox />I acknowledge that I have access to the selected private key file (<HiddenName />and</Line>
            <Line $ls={0.125}>that without this file, I won't be able to log into my instance.</Line>
          </Acknowledge>
          <DialogActions>
            <CancelLink>Cancel</CancelLink>
            <Button $tone="light" $w={140}>Launch Instances</Button>
          </DialogActions>
        </DialogBody>
      </Dialog>

      <Menu>
        <MenuItem>
          <MenuMark><svg width="11" height="11" viewBox="0 0 11 11" fill="none" stroke="#fff" strokeWidth="1.800"><path d="m1 6 3 3.800L10 .8" /></svg></MenuMark>
          Choose an existing key pair
        </MenuItem>
        <MenuItem $active><MenuMark />Create a new key pair</MenuItem>
        <MenuItem><MenuMark />Proceed without a key pair</MenuItem>
      </Menu>

      <Dock>
        <svg width="0" height="0">
          <defs>
            <linearGradient id="finder" x1="0" y1="0" x2="0" y2="1"><stop offset="0" stopColor="#19d0fd" /><stop offset="1" stopColor="#1e8df3" /></linearGradient>
            <linearGradient id="safari" x1="0" y1="0" x2="0" y2="1"><stop offset="0" stopColor="#1fb2f5" /><stop offset="1" stopColor="#1d6fe3" /></linearGradient>
            <linearGradient id="note" x1="0" y1="0" x2="0" y2="1"><stop offset="0" stopColor="#fb4f86" /><stop offset="1" stopColor="#7c68f5" /></linearGradient>
            <linearGradient id="store" x1="0" y1="0" x2="0" y2="1"><stop offset="0" stopColor="#18b2f8" /><stop offset="1" stopColor="#1c3df0" /></linearGradient>
            <linearGradient id="bin" x1="0" y1="0" x2="1" y2="0"><stop offset="0" stopColor="#4c5155" /><stop offset=".5" stopColor="#6d7276" /><stop offset="1" stopColor="#484c50" /></linearGradient>
          </defs>
        </svg>
        {dockIcons.map((icon, i) => (
          <DockSlot key={i} $running={icon.running}><DockSvg>{icon.art}</DockSvg></DockSlot>
        ))}
        <DockDivider />
        <DockSlot>
          <DockSvg>
            <path d="M5.500 5.500 9.500 34q9 3 18 0l4-28.500z" fill="url(#bin)" />
            <ellipse cx="18.500" cy="5.500" rx="13" ry="2" fill="#3c4043" stroke="#7f8488" />
          </DockSvg>
        </DockSlot>
      </Dock>
    </Desktop>
  );
}
